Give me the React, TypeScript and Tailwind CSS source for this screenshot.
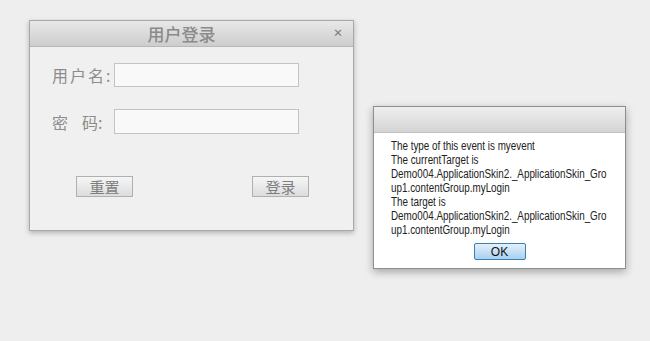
export default function App() {
    const lines = [
        "The type of this event is myevent",
        "The currentTarget is",
        "Demo004.ApplicationSkin2._ApplicationSkin_Gro",
        "up1.contentGroup.myLogin",
        "The target is",
        "Demo004.ApplicationSkin2._ApplicationSkin_Gro",
        "up1.contentGroup.myLogin",
    ];

    return (
        <div className="w-[650px] h-[341px] bg-[#eeeeee] flex items-start pl-[29px] pt-[20px] overflow-hidden">
            {/* login panel */}
            <div
                className="w-[325px] h-[211px] border border-[#a8a8a8] bg-[#f0f0f0] shadow-[0_2px_5px_rgba(0,0,0,0.25)] flex flex-col"
                style={{ fontFamily: '"Noto Sans CJK SC", "Noto Sans", sans-serif' }}
            >
                <div className="h-[26px] bg-gradient-to-b from-[#e8e8e8] to-[#cdcdcd] border-b border-[#b8b8b8] flex items-center relative">
                    <span className="flex-1 text-center text-[17px] leading-none text-[#8a8a8a] font-medium pr-[20px]">用户登录</span>
                    <span className="absolute right-[10px] top-[7px] text-[10px] leading-none text-[#777] font-bold">×</span>
                </div>
                <div className="flex flex-col pl-[22px] pt-[16px] gap-[22px]">
                    <div className="flex items-center h-[24px]">
                        <span className="w-[62px] text-[16px] text-[#8c8c8c] tracking-[2px]">用户名:</span>
                        <div className="w-[185px] h-[24px] border border-[#c4c4c4] bg-[#f9f9f9]" />
                    </div>
                    <div className="flex items-center h-[25px]">
                        <span className="w-[62px] text-[16px] text-[#8c8c8c] flex">
                            <span>密</span>
                            <span className="ml-[14px]">码:</span>
                        </span>
                        <div className="w-[185px] h-[25px] border border-[#c4c4c4] bg-[#f9f9f9]" />
                    </div>
                </div>
                <div className="flex justify-between pl-[46px] pr-[44px] mt-[42px]">
                    <button className="w-[57px] h-[21px] border border-[#b0b0b0] bg-gradient-to-b from-[#f6f6f6] to-[#dcdcdc] text-[15px] leading-none text-[#7e7e7e] flex items-center justify-center">
                        重置
                    </button>
                    <button className="w-[57px] h-[21px] border border-[#b0b0b0] bg-gradient-to-b from-[#f6f6f6] to-[#dcdcdc] text-[15px] leading-none text-[#7e7e7e] flex items-center justify-center">
                        登录
                    </button>
                </div>
            </div>

            {/* alert window */}
            <div
                className="ml-[19px] mt-[86px] w-[253px] h-[163px] border border-[#8e8e8e] bg-white shadow-[0_3px_8px_rgba(0,0,0,0.3)] flex flex-col"
                style={{ fontFamily: '"Liberation Sans", Arial, sans-serif' }}
            >
                <div className="h-[26px] bg-gradient-to-b from-[#efefef] to-[#d4d4d4] border-b border-[#c0c0c0]" />
                <div className="pl-[17px] pt-[6px] text-[12px] leading-[14px] text-[#222]">
                    {lines.map((l, i) => (
                        <div key={i} className="whitespace-nowrap scale-x-[0.82] origin-left">{l}</div>
                    ))}
                </div>
                <div className="flex justify-center mt-[6px]">
                    <button className="w-[52px] h-[17px] rounded-[2px] border border-[#3c7fb1] bg-gradient-to-b from-[#e3f1fb] to-[#a8cfee] text-[12px] leading-none text-[#111] flex items-center justify-center">
                        OK
                    </button>
                </div>
            </div>
        </div>
    );
}
